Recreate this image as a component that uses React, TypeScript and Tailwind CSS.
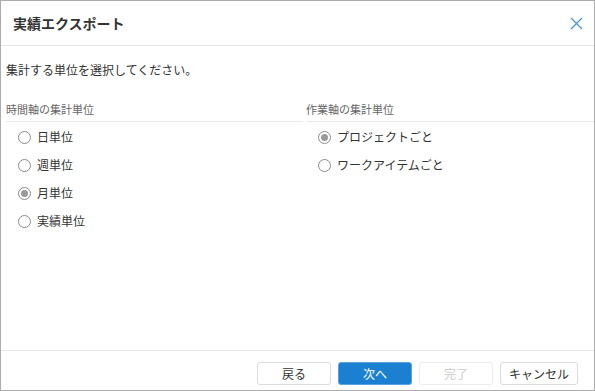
import { useState } from "react";

const timeUnits = ["日単位", "週単位", "月単位", "実績単位"];
const workUnits = ["プロジェクトごと", "ワークアイテムごと"];

function Radio({ label, checked, onClick }: { label: string; checked: boolean; onClick: () => void }) {
  return (
    <div className="flex h-[28px] cursor-default items-center gap-[6px] pl-[12px]" onClick={onClick}>
      <span className="flex h-[13px] w-[13px] items-center justify-center rounded-full border border-[#8a8a8a] bg-white">
        {checked && <span className="h-[7px] w-[7px] rounded-full bg-[#9a9a9a]" />}
      </span>
      <span className="text-[12px] leading-[18px] text-[#333]">{label}</span>
    </div>
  );
}

export default function App() {
  const [time, setTime] = useState("月単位");
  const [work, setWork] = useState("プロジェクトごと");

  return (
    <div
      className="flex h-[391px] w-[595px] flex-col border border-[#acacac] bg-white"
      style={{ fontFamily: '"Noto Sans CJK JP", "Noto Sans", sans-serif' }}
    >
      {/* header */}
      <div className="flex h-[45px] shrink-0 items-center justify-between border-b border-[#e6e6e6] pl-[12px] pr-[11px]">
        <span className="text-[14px] font-bold text-[#333]">実績エクスポート</span>
        <button className="flex h-[14px] w-[14px] items-center justify-center">
          <svg width="13" height="13" viewBox="0 0 13 13" fill="none" stroke="#4a9ad9" strokeWidth="1.4">
            <path d="M1 1 L12 12 M12 1 L1 12" />
          </svg>
        </button>
      </div>

      {/* body */}
      <div className="flex-1 pl-[5px]">
        <p className="pt-[15px] text-[12px] leading-[18px] text-[#333]">集計する単位を選択してください。</p>
        <div className="mt-[21px] grid grid-cols-[297px_1fr] gap-[3px]">
          <div>
            <div className="h-[22px] border-b border-[#e8e8e8] text-[11px] leading-[18px] text-[#666]">時間軸の集計単位</div>
            <div className="mt-[1px]">
              {timeUnits.map((u) => (
                <Radio key={u} label={u} checked={time === u} onClick={() => setTime(u)} />
              ))}
            </div>
          </div>
          <div>
            <div className="h-[22px] border-b border-[#e8e8e8] text-[11px] leading-[18px] text-[#666]">作業軸の集計単位</div>
            <div className="mt-[1px]">
              {workUnits.map((u) => (
                <Radio key={u} label={u} checked={work === u} onClick={() => setWork(u)} />
              ))}
            </div>
          </div>
        </div>
      </div>

      {/* footer */}
      <div className="flex h-[40px] shrink-0 items-start justify-end gap-[7px] border-t border-[#e6e6e6] pr-[16px] pt-[11px]">
        <button className="h-[23px] w-[74px] rounded-[3px] border border-[#dcdcdc] bg-white text-[12px] text-[#333]">戻る</button>
        <button className="h-[23px] w-[74px] rounded-[3px] border border-[#5aa3e0] bg-[#1b7fd2] text-[12px] text-white">次へ</button>
        <button className="h-[23px] w-[74px] rounded-[3px] border border-[#ececec] bg-white text-[12px] text-[#cccccc]" disabled>
          完了
        </button>
        <button className="h-[23px] w-[78px] rounded-[3px] border border-[#dcdcdc] bg-white text-[12px] text-[#333]">キャンセル</button>
      </div>
    </div>
  );
}
